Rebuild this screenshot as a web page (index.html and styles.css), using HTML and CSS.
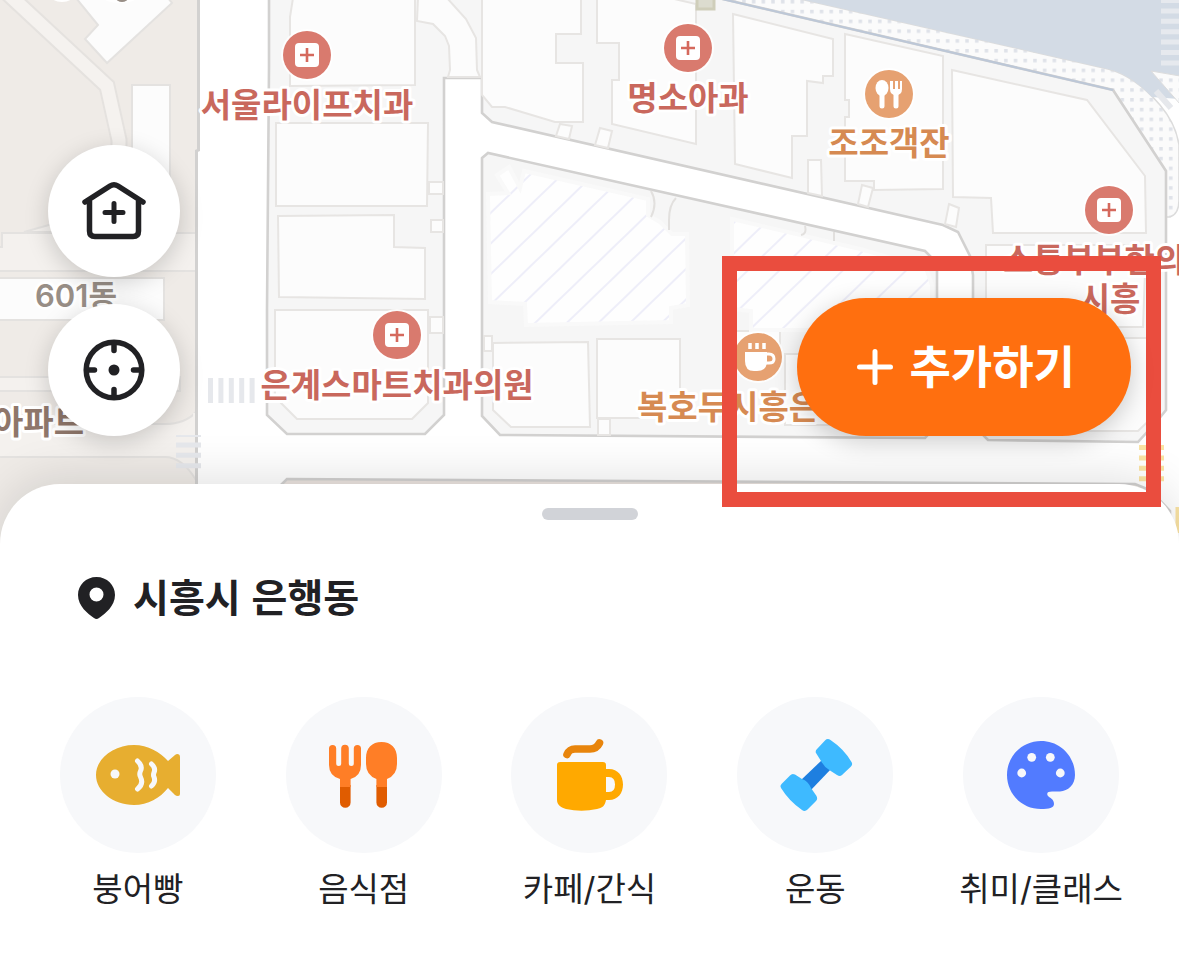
FILE: index.html
```html
<!DOCTYPE html>
<html lang="ko">
<head>
<meta charset="utf-8">
<meta name="viewport" content="width=device-width, initial-scale=1">
<title>시흥시 은행동</title>
<link rel="stylesheet" href="styles.css">
</head>
<body>
<main class="app">
  <section class="map" aria-label="지도">
    <svg class="map-canvas" viewBox="0 0 1179 548" preserveAspectRatio="xMidYMin slice">
      <defs>
        <pattern id="hatch" width="22" height="22" patternUnits="userSpaceOnUse" patternTransform="rotate(46)">
          <rect width="22" height="22" fill="#fefefe"/>
          <path d="M10 0V22" stroke="#eaeaf8" stroke-width="1.600"/>
        </pattern>
        <pattern id="dots" width="9.700" height="9.800" patternUnits="userSpaceOnUse">
          <rect width="10" height="10" fill="#fbfbfb"/>
          <path d="M5 0h3.500v3.500h-3.500z" fill="#dfe2e9"/>
        </pattern>
        <g id="clinic">
          <circle r="26" fill="#fff" opacity=".8"/>
          <circle r="24" fill="#d97a6e"/>
          <rect x="-12" y="-12" width="24" height="24" rx="4" fill="#fff"/>
          <path d="M-7 0H7M0-7V7" stroke="#d5695d" stroke-width="2.600"/>
        </g>
      </defs>
      <rect width="1179" height="548" fill="#fff"/>

      <!-- apartment complex -->
      <path d="M0 0H198V150L197 548H0Z" fill="#efebe7"/>
      <path d="M6-8L107 86L119 140V170" fill="none" stroke="#e5e2df" stroke-width="17"/>
      <path d="M6-8L107 86L119 140V170" fill="none" stroke="#f5f2ef" stroke-width="13"/>
      <g stroke="#e4e2e0" stroke-width="2">
        <path d="M76-2L98 25L85 39L107 63L172 3L168-2ZM132 85H170V230H132Z" fill="#fcfcfc"/>
        <path d="M-2 247H2V233H197V271H-2ZM24 232L70 219V232Z" fill="#f4f1ee"/>
        <path d="M-2 278H164V320H-2Z" fill="#fcfcfc"/>
        <path d="M-2 377H180V391H-2Z" fill="#f4f1ee"/>
        <path d="M-2 457V424H165Q185 424 196 412V480Q182 457 165 457Z" fill="#f4f1ee"/>
      </g>
      <path d="M195 413V474" stroke="#f4f1ee" stroke-width="4"/>
      <path d="M198.500 0V150L196.500 151V548" fill="none" stroke="#d2d1d0" stroke-width="3"/>
      <ellipse cx="62" cy="-5" rx="12" ry="7" fill="#fff"/><ellipse cx="120" cy="-4" rx="18" ry="7" fill="#fff"/><ellipse cx="122" cy="-2" rx="6" ry="4" fill="#988e86"/>

      <!-- waterfront -->
      <path d="M722-1L1113 90L1166 171V217H1170Q1179 214 1179 200V145Q1176 124 1160 105Q1135 76 1108 69L800-1Z" fill="url(#dots)" stroke="#dcdcdc" stroke-width="1.500"/>
      <path d="M800-1L1108 69Q1130 74 1152 97L1179 99V-1Z" fill="#d3dbe5"/>
      <path d="M1151 71L1180 76V104Z" fill="url(#dots)" stroke="#dcdcdc"/>
      <path d="M1170 0V66" stroke="#e6e9ee" stroke-width="18" stroke-dasharray="5 5.400" stroke-dashoffset="2"/>
      <path d="M1156 91L1171 108" stroke="#e6e8ec" stroke-width="6"/>

      <!-- blocks -->
      <g fill="#f6f6f6" stroke="#d2d1d0" stroke-width="2.600">
        <path d="M269-4L269 67L267 310V415L287 434H425L444 415V78H482V113L492 122L943 225L958 232L970 256L973 275V425L988 440L1138 442L1158 420L1166 410V171L1113 90L710-4Z"/>
        <path d="M482 158L488 153L925 251L937 263V425L925 438L500 435L482 416Z"/>
        <path d="M280 486L287 479L1135 484L1150 490L1170 511V560H280Z" fill="#ebe4df"/>
      </g>
      <path d="M722-1L1113 90" stroke="#bcc7d7" stroke-width="2"/>

      <!-- buildings -->
      <g fill="#fcfcfc" stroke="#e7e5e3" stroke-width="2">
        <path d="M293-2L290 17V86L415 85V-2Z"/>
        <path d="M418-2L417 21L433 24L445 36L449 46L450 70L448 77H480L477 70L476 38L466 19L447-2Z"/>
        <path d="M276 123H428L427 206H276ZM278 216L394 215V247L425 248V299L279 297Z"/>
        <path d="M275 310H428V403L412 419H297L275 397Z"/>
        <path d="M429 182H443V194H429ZM431 220H443V232H431ZM430 317H443V333H430Z"/>
        <path d="M482-2V95L492 107H505L555 122H583V63H556V34H581V-2Z"/>
        <path d="M597-2V43H619V80H612V124L696 144V4L670-2Z"/>
        <path d="M733 14L833 39V76H823V83L807 81V136H792V178L735 164Z"/>
        <path d="M845 34L943 56V189L874 190V181H845V117H849V100H845Z"/>
        <path d="M952 70L1087 100L1145 176L1146 233H993L991 198L953 197Z"/>
        <path d="M560 124L572 126L569 139L556 136ZM600 128L612 131L608 148L595 145ZM808 160H821L822 196L808 193ZM862 185L873 188L868 207L858 204ZM949 204L959 208L956 227L945 224Z"/>
        <path d="M986 245H1146L1143 327H986ZM986 338H1160V410L1138 431H997L986 421Z"/>
        <path d="M493 343L588 342L590 427H511L493 410ZM597 339H680V418H597ZM484 336H492V351H484ZM598 419H610V435H598Z"/>
        <path d="M725 331H780V354H725ZM785 354H930V425H785Z"/>
      </g>
      <g fill="url(#hatch)" stroke="#f9f9f9" stroke-width="4">
        <path d="M488 194L508 193L497 175L509 167L520 188L524 171L648 199V215L660 222L672 234H687L688 305L671 308V322L526 325L525 304L490 302Z"/>
        <path d="M732 219L860 249L926 268L932 285V330H751V311L732 309Z"/>
      </g>
      <path d="M651 191Q658 203 651 217M676 198Q669 205 669 220V230M805 226Q807 234 801 235M834 232V241" fill="none" stroke="#e2e0de" stroke-width="2"/>
      <path d="M697-2H714V9H697Z" fill="#dcdccf" stroke="#cfceba" stroke-width="3"/>

      <!-- crossings -->
      <g fill="none" stroke="#e6e8ec">
        <path d="M208 390.500H256" stroke-width="25" stroke-dasharray="5 5.400"/>
        <path d="M188.500 435V469" stroke-width="25" stroke-dasharray="5 5.400" stroke-dashoffset="3"/>
        <path d="M1151.500 445V482" stroke="#fae3a4" stroke-width="25" stroke-dasharray="5 5.400"/>
        <path d="M1178 507V533" stroke="#fae3a4" stroke-width="5"/>
      </g>

      <use href="#clinic" x="307" y="55"/>
      <use href="#clinic" x="688" y="48"/>
      <use href="#clinic" x="1109" y="210"/>
      <use href="#clinic" x="397" y="335"/>
      <g transform="translate(889 94)">
        <circle r="26" fill="#fff" opacity=".8"/><circle r="24" fill="#e6a171"/>
        <ellipse cx="-7" cy="-6" rx="6.500" ry="8" fill="#fff"/>
        <path d="M-7 0V12M7 0V12" stroke="#fff" stroke-width="5" stroke-linecap="round"/>
        <path d="M1-13V-5Q1 1 7 1Q13 1 13-5V-13H11V-5H9V-13H6V-5H4V-13Z" fill="#fff"/>
      </g>
      <g transform="translate(758 357)">
        <circle r="26" fill="#fff" opacity=".8"/><circle r="24" fill="#e6a171"/>
        <path d="M-13-5H9V4Q9 14-1 14H-4Q-13 14-13 4Z" fill="#fff"/>
        <path d="M8-3H11Q16-3 16 2Q16 6 11 6H8" fill="none" stroke="#fff" stroke-width="3"/>
        <path d="M-8-14V-8M-1-14V-8M6-14V-8" stroke="#fff" stroke-width="3.500"/>
      </g>

      <g class="place-label clinic-label">
        <text x="307" y="117" text-anchor="middle">서울라이프치과</text>
        <text x="688" y="110" text-anchor="middle">명소아과</text>
        <text x="397" y="397" text-anchor="middle">은계스마트치과의원</text>
        <text x="1003" y="272">소통부부한의</text>
        <text x="1110" y="311" text-anchor="middle">시흥</text>
      </g>
      <g class="place-label food-label">
        <text x="889" y="155" text-anchor="middle">조조객잔</text>
        <text x="637" y="419">복호두시흥은</text>
      </g>
      <g class="place-label housing-label">
        <text class="block-number" x="76" y="307" text-anchor="middle">601동</text>
        <text x="84" y="434" text-anchor="end">아파트</text>
      </g>
    </svg>

    <div class="map-tools">
      <button class="round-button" type="button" aria-label="우리 동네">
        <svg viewBox="0 0 132 132" fill="none" stroke="#212124" stroke-width="5.500" stroke-linecap="round" stroke-linejoin="round">
          <path d="M37 57L62 41Q66 38.500 70 41L95 57M41.500 56V86Q41.500 91.500 47 91.500H85Q90.500 91.500 90.500 86V56"/>
          <path d="M57 67.500H75M66 58.500V76.500" stroke-width="5"/>
        </svg>
      </button>
      <button class="round-button" type="button" aria-label="현재 위치">
        <svg viewBox="0 0 132 132" fill="none" stroke="#212124" stroke-width="5.500" stroke-linecap="round">
          <circle cx="66" cy="66" r="27.800"/>
          <path d="M66 40V46.500M66 85.500V92M40 66H46.500M85.500 66H92"/>
          <circle cx="66" cy="66" r="5.500" fill="#212124" stroke="none"/>
        </svg>
      </button>
    </div>

    <div class="highlight">
      <button class="add-button" type="button">
        <svg viewBox="0 0 36 36" fill="none" stroke="#fff" stroke-width="5" stroke-linecap="round"><path d="M2.500 18H33.500M18 2.500V33.500"/></svg>
        <span>추가하기</span>
      </button>
    </div>
  </section>

  <section class="sheet">
    <div class="handle"></div>
    <h1 class="region">
      <svg viewBox="0 0 37 42"><path fill="#212124" fill-rule="evenodd" d="M18.500 0C8 0 0 8 0 18C0 29 10 37 16 41Q18.500 42.800 21 41C27 37 37 29 37 18C37 8 29 0 18.500 0ZM18.500 10.500A7 7 0 1 1 18.500 24.500A7 7 0 1 1 18.500 10.500Z"/></svg>
      <span>시흥시 은행동</span>
    </h1>
    <nav class="categories" aria-label="카테고리">
      <a class="category" href="#bungeoppang">
        <svg viewBox="0 0 156 156">
          <path d="M36 78C36 62 53 48 74 48C88 48 100 55 108 64L115 58Q117 56.500 119 57.500Q120 58 120 60V97Q120 99 118 99Q116 99 115 98L108 91C100 101 88 108 74 108C53 108 36 94 36 78Z" fill="#e7ae30"/>
          <circle cx="55" cy="77" r="4.500" fill="#f7f8fa"/>
          <path d="M77.500 64Q83 69 80.500 74Q79 77 80.500 80Q84 87 77.500 92M91.500 67Q96 71 94 75.500Q93 78 94 80Q96 85 91.500 89" fill="none" stroke="#f7f8fa" stroke-width="5" stroke-linecap="round"/>
        </svg>
        <span>붕어빵</span>
      </a>
      <a class="category" href="#food">
        <svg viewBox="0 0 156 156">
          <path d="M54 88V105.500A5.300 5.300 0 0 0 64.600 105.500V88ZM90.400 88V105.500A5.300 5.300 0 0 0 101 105.500V88Z" fill="#e05c00"/>
          <path d="M43 51.500A3.600 3.600 0 0 1 50.200 51.500V66.500A2.400 2.400 0 0 0 55.200 66.500V51.500A3.800 3.800 0 0 1 62.800 51.500V66.500A2.400 2.400 0 0 0 67.800 66.500V51.500A3.600 3.600 0 0 1 75 51.500V68Q75 79 64.600 82V90H54V82Q43 79 43 68Z" fill="#ff7e26"/>
          <path d="M80 61C80 51 86 45 95.500 45C105 45 111 51 111 61V67Q111 78 101 82V90H90.400V82Q80 78 80 67Z" fill="#ff7e26"/>
        </svg>
        <span>음식점</span>
      </a>
      <a class="category" href="#cafe">
        <svg viewBox="0 0 156 156">
          <path d="M56 57.500C58 53 60 52 64 52H79C84 52 86.500 50 88.500 46" fill="none" stroke="#e8850c" stroke-width="7.600" stroke-linecap="round"/>
          <path d="M46 68Q46 65 49 65H92Q95 65 95 68V72H98C107 72 112 79 112 87.500C112 96 107 103 98 103H95C94 109 91 111 86 112Q70.500 115.500 55 112C49 110.500 46 107 46 103ZM95 80V95H98Q104 95 104 87.500Q104 80 98 80Z" fill="#ffa900" fill-rule="evenodd"/>
        </svg>
        <span>카페/간식</span>
      </a>
      <a class="category" href="#fitness">
        <svg viewBox="0 0 156 156">
          <path d="M86 62L95 71L73 94L63 84Z" fill="#1e7fe0"/>
          <g fill="#3ebaff">
            <path d="M88 43.500Q90.500 41 93.500 43Q107 52 114.500 65Q116 67.500 114 69.500L105 78Q103 80 100 78L93 73.500Q87 70 84 64L79 56Q78 54 80 52Z"/>
            <path d="M53 78.500Q55 76 58 77.500L65 82Q71 84 74 91L79.500 99Q81 102 79 104L70.500 112.500Q68 115 65 113Q52 104 44 91Q42.500 89 44.500 87Z"/>
          </g>
        </svg>
        <span>운동</span>
      </a>
      <a class="category" href="#hobby">
        <svg viewBox="0 0 156 156">
          <path d="M78 44C97 44 112 59 112 78C112 88 105 94 97 94.500H89C85 94.500 83 96 85 99C87 101 91 102 91 107C91 111 86 112 78 112C59 112 44 97 44 78C44 59 59 44 78 44Z" fill="#527bff"/>
          <g fill="#f7f8fa"><circle cx="58.700" cy="76" r="4.400"/><circle cx="68.700" cy="60.300" r="4.400"/><circle cx="87.300" cy="60.300" r="4.400"/><circle cx="97.300" cy="76" r="4.400"/></g>
        </svg>
        <span>취미/클래스</span>
      </a>
    </nav>
  </section>
</main>
</body>
</html>
```
FILE: styles.css
```css
* {
  box-sizing: border-box;
}

body {
  margin: 0;
  background: #fff;
  color: #212124;
  font-family: "Noto Sans CJK KR", "Noto Sans", sans-serif;
}

button {
  border: 0;
  padding: 0;
  font: inherit;
  cursor: pointer;
}

.app {
  display: flex;
  flex-direction: column;
  min-height: 100vh;
  overflow: hidden;
}

.map {
  position: relative;
  height: 548px;
  margin-bottom: -64px;
}

.map-canvas {
  display: block;
  width: 100%;
  height: 100%;
}

.place-label {
  font-size: 33px;
  font-weight: 700;
  stroke: #fff;
  stroke-width: 6px;
  stroke-linejoin: round;
  paint-order: stroke;
}

.clinic-label {
  fill: #c9685d;
}

.food-label {
  fill: #d68a52;
}

.housing-label {
  fill: #8f776b;
}

.block-number {
  font-family: Inter, "Noto Sans CJK KR", sans-serif;
  font-size: 31px;
  font-weight: 600;
  fill: #988e86;
}

.map-tools {
  position: absolute;
  top: 145px;
  left: 48px;
  display: grid;
  gap: 27px;
}

.round-button {
  width: 132px;
  height: 132px;
  border-radius: 50%;
  background: #fff;
  box-shadow: 0 6px 24px rgba(0, 0, 0, 0.18);
}

.round-button svg {
  display: block;
}

.highlight {
  position: absolute;
  z-index: 2;
  top: 256px;
  right: 18px;
  padding: 27px 15px 56px 60px;
  border: 15px solid #ea4d3e;
}

.add-button {
  display: flex;
  align-items: center;
  gap: 16px;
  height: 138px;
  padding: 0 56px 0 60px;
  border-radius: 69px;
  background: #ff6f0f;
  box-shadow: 0 6px 24px rgba(0, 0, 0, 0.2);
  color: #fff;
  font-size: 45px;
  font-weight: 700;
  line-height: 60px;
  white-space: nowrap;
}

.add-button span {
  padding-bottom: 4px;
}

.add-button svg {
  width: 36px;
  height: 36px;
}

.sheet {
  position: relative;
  z-index: 1;
  flex: 1;
  padding: 24px 25px 48px;
  border-radius: 60px 60px 0 0;
  background: #fff;
  box-shadow: 0 -6px 48px rgba(0, 0, 0, 0.12);
}

.handle {
  width: 96px;
  height: 12px;
  margin: 0 auto;
  border-radius: 6px;
  background: #d1d3d8;
}

.region {
  display: flex;
  align-items: center;
  gap: 18px;
  margin: 48px 53px 69px;
  font-size: 39px;
  font-weight: 700;
  line-height: 54px;
}

.region span {
  padding-bottom: 6px;
}

.region svg {
  width: 37px;
  height: 42px;
}

.categories {
  display: grid;
  grid-template-columns: repeat(5, 1fr);
}

.category {
  display: grid;
  justify-items: center;
  gap: 12px;
  color: inherit;
  font-family: Inter, "Noto Sans CJK KR", sans-serif;
  font-size: 33px;
  line-height: 48px;
  text-decoration: none;
  white-space: nowrap;
}

.category svg {
  width: 156px;
  height: 156px;
  border-radius: 50%;
  background: #f7f8fa;
}
```
